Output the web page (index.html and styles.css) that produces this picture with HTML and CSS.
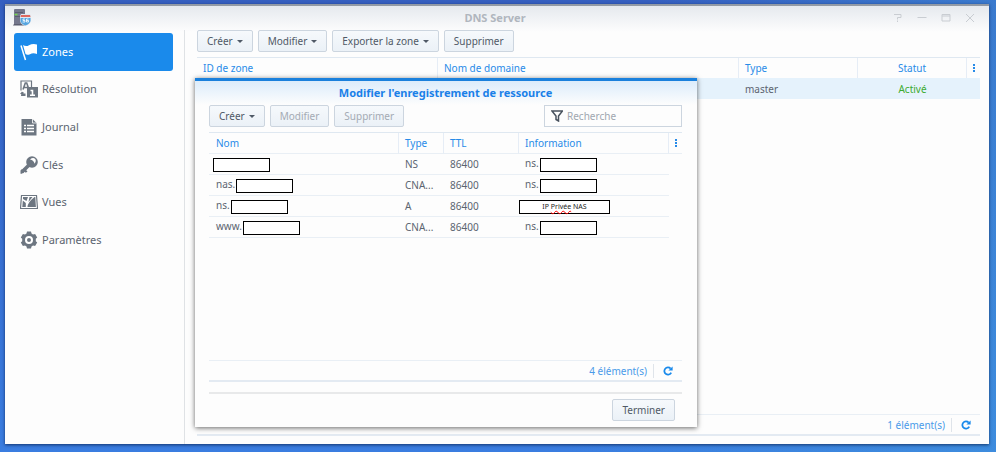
FILE: index.html
```html
<!DOCTYPE html>
<html lang="fr">
<head>
<meta charset="utf-8">
<title>DNS Server</title>
<link rel="stylesheet" href="styles.css">
</head>
<body>
<svg class="sprite" aria-hidden="true">
  <symbol id="refresh" viewBox="0 0 10 10"><path d="M8.2 6.6A3.6 3.6 0 1 1 7.6 2.6" fill="none" stroke="currentColor" stroke-width="1.8"/><path d="M9.6 0.6V4.6H5.4Z" fill="currentColor"/></symbol>
</svg>
<div class="window">
  <header class="titlebar">
    <svg class="app-icon" viewBox="0 0 18 18" aria-hidden="true">
      <rect x="1" y="0" width="11" height="16" rx="1" fill="#74778c"/><path d="M1 15h11v1.500H0z" fill="#5b5d70"/>
      <path d="M2 3.500h8M2 7.500h6" stroke="#5a5c70"/><path d="M1.500 5.500h3" stroke="#71d54d" stroke-width="1.500"/>
      <path d="M8 5h9l1 2v5q-1 4-5.500 5Q8 16 7 12V7z" fill="#dfe8f1"/><path d="M8 6h9l.5 2h-10z" fill="#df685e"/><path d="M7.500 9h10v3q-1 3-5 4.500Q8.500 15 7.500 12z" fill="#55a5e0"/>
      <path d="M12 10h-2v1.500h2V13H9.500M15.500 10h-2v3h2v-1.500h-2" fill="none" stroke="#fff" stroke-width=".8"/>
    </svg>
    <h1>DNS Server</h1>
    <div class="controls">
      <button type="button" aria-label="Aide"><svg viewBox="0 0 10 10"><path d="M1 1.500h7v3H4.500v2M4.500 7.500v1.500"/></svg></button>
      <button type="button" aria-label="Réduire"><svg viewBox="0 0 10 10"><path d="M0.500 4.500h9"/></svg></button>
      <button type="button" aria-label="Agrandir"><svg viewBox="0 0 10 10"><path d="M1 1.500h8v6.500H1zM1 3h8"/></svg></button>
      <button type="button" aria-label="Fermer"><svg viewBox="0 0 10 10"><path d="M1 1l8 8M9 1L1 9"/></svg></button>
    </div>
  </header>
  <div class="body">
    <nav class="sidebar">
      <div class="nav-list">
      <a class="active" href="#zones"><svg viewBox="0 0 18 18"><path d="M1 2.500L5.500 17" stroke="currentColor" stroke-width="1.500"/><path d="M3 2q3 2 6 .2Q13 0 17 1.500V11q-4-1.500-7 .2Q7 12.500 5.500 11z" fill="currentColor"/></svg>Zones</a>
      <a href="#resolution"><svg viewBox="0 0 18 18"><path d="M1 10.500V1h10.500v6" fill="none" stroke="currentColor" stroke-width="1.200"/><path d="M3 9.500L5.300 3h1.400L9 9.500M4 7.500h4" fill="none" stroke="currentColor" stroke-width="1.600"/><path d="M7 7h11v10.500H7z" fill="currentColor"/><path d="M10.500 10.500h2v5M10 15.200h5" fill="none" stroke="#fff" stroke-width="1.600"/><path d="M1 16h4.500v-2.500H3.500V12H1.500M2 11.500L0 14h4z" fill="currentColor"/></svg>Résolution</a>
      <a href="#journal"><svg viewBox="0 0 18 18"><path d="M1.500 1h11l4 4v12.500h-15z" fill="currentColor"/><path d="M12.500 1v4h4" fill="none" stroke="#fff" stroke-width=".8"/><path d="M4 7.500h2M4 10.500h2M4 13.500h2M7 7.500h7M7 10.500h7M7 13.500h7" stroke="#fff" stroke-width="1.500"/></svg>Journal</a>
      <a href="#cles"><svg viewBox="0 0 18 18"><path d="M9 9L2 16" stroke="currentColor" stroke-width="3.500"/><path d="M4 12l3.500 3.500-1.700 1.200-3-2.700zM0.500 14.500L2 13l2 3-2 1.800H.5z" fill="currentColor"/><circle cx="12" cy="6" r="5.800" fill="currentColor"/><path d="M10 3.500q3-2.500 5-.7 1.800 2-.5 5-.5-3.500-4.500-4.300z" fill="#fff"/></svg>Clés</a>
      <a href="#vues"><svg viewBox="0 0 18 18"><path d="M1.500 2.500h15l1 13H.5z" fill="#fff" stroke="currentColor" stroke-width="1.200"/><path d="M3 4h5L6.500 8 3 6zM2.800 7.500l3 2.500v4H2.300zM9.500 4h3L8.500 9zM14.500 4H15.300l.6 10H7.500Q7.500 9.500 14.500 4z" fill="currentColor"/></svg>Vues</a>
      <a href="#parametres"><svg viewBox="0 0 18 18"><path d="M6.500 2.500L7 0.500h4l.5 2 1.500 1 2.100-.5 2.100 3.400-1.400 1.400v2.400l1.400 1.400-2.100 3.400-2.100-.5-1.500 1-.5 2H7l-.5-2-1.500-1-2.100.5-2.100-3.400 1.400-1.400V7.800L.8 6.400 2.900 3l2.100.5z" fill="currentColor"/><circle cx="9" cy="9" r="3" fill="none" stroke="#fff" stroke-width="2"/></svg>Paramètres</a>
      </div>
    </nav>
    <main class="main">
      <div class="toolbar">
        <button type="button" class="btn menu">Créer</button>
        <button type="button" class="btn menu">Modifier</button>
        <button type="button" class="btn menu">Exporter la zone</button>
        <button type="button" class="btn">Supprimer</button>
      </div>
      <table class="grid zones">
        <colgroup><col class="z-id"><col><col class="z-type"><col class="z-status"><col class="c-menu"></colgroup>
        <thead><tr><th>ID de zone</th><th>Nom de domaine</th><th>Type</th><th class="center">Statut</th><th class="more"><i class="dots"></i></th></tr></thead>
        <tbody><tr class="selected"><td></td><td></td><td>master</td><td class="center ok">Activé</td><td></td></tr></tbody>
      </table>
      <div class="pager"><span>1 élément(s)</span><button type="button" aria-label="Actualiser"><svg><use href="#refresh"/></svg></button></div>
    </main>
  </div>
  <section class="dialog" role="dialog" aria-labelledby="dlg-title">
    <h2 id="dlg-title">Modifier l'enregistrement de ressource</h2>
    <div class="toolbar">
      <button type="button" class="btn menu">Créer</button>
      <button type="button" class="btn" disabled>Modifier</button>
      <button type="button" class="btn" disabled>Supprimer</button>
      <label class="search"><svg viewBox="0 0 12 12" aria-hidden="true"><path d="M1 1h10.500L7.500 6v5L5 9.500V6z" fill="none" stroke="#48525e" stroke-width="1.500"/></svg><input type="text" placeholder="Recherche" aria-label="Recherche"></label>
    </div>
    <table class="grid records">
      <colgroup><col><col class="r-type"><col class="r-ttl"><col class="r-info"><col class="c-menu"></colgroup>
      <thead><tr><th>Nom</th><th>Type</th><th>TTL</th><th>Information</th><th class="more"><i class="dots"></i></th></tr></thead>
      <tbody>
        <tr><td class="flush"><span class="mask"></span></td><td>NS</td><td>86400</td><td>ns.<span class="mask"></span></td></tr>
        <tr><td>nas.<span class="mask"></span></td><td>CNA...</td><td>86400</td><td>ns.<span class="mask"></span></td></tr>
        <tr><td>ns.<span class="mask"></span></td><td>A</td><td>86400</td><td class="note-cell"><span class="mask note">IP <span class="typo">Privée</span> NAS</span></td></tr>
        <tr><td>www.<span class="mask"></span></td><td>CNA...</td><td>86400</td><td>ns.<span class="mask"></span></td></tr>
      </tbody>
    </table>
    <div class="pager"><span>4 élément(s)</span><button type="button" aria-label="Actualiser"><svg><use href="#refresh"/></svg></button></div>
    <footer><button type="button" class="btn">Terminer</button></footer>
  </section>
</div>
</body>
</html>
```
FILE: styles.css
```css
* { box-sizing: border-box; }
body {
  margin: 0;
  height: 100vh;
  padding: 4px 7px 8px 5px;
  background: linear-gradient(100deg, rgba(64, 150, 220, 0) 60%, rgba(64, 150, 220, .6)), linear-gradient(#355fc0, #3a7de0);
  font: 10px/14px "Noto Sans", sans-serif;
  color: #5b6470;
}
.sprite { display: none; }
button, input { font: inherit; color: inherit; }
.window {
  position: relative;
  height: 100%;
  display: flex;
  flex-direction: column;
  border-top: 2px solid #929aa5;
  background: linear-gradient(#e5e9ee, #fdfdfd 26px);
  box-shadow: 0 1px 3px rgba(0, 20, 60, .7);
}
.titlebar {
  display: grid;
  grid-template-columns: 1fr auto 1fr;
  align-items: center;
  height: 24px;
  padding: 0 12px 0 8px;
}
.titlebar h1 { margin: 0; font-size: 11px; color: #b0b6be; }
.app-icon { width: 18px; height: 18px; }
.controls { display: flex; justify-content: flex-end; gap: 10px; }
.controls button { padding: 0; border: 0; background: none; width: 14px; height: 14px; display: grid; place-items: center; }
.controls svg { width: 10px; height: 10px; fill: none; stroke: #c9cdd2; stroke-width: 1; }
.body { flex: 1; display: flex; min-height: 0; }
.sidebar {
  width: 180px;
  flex: none;
  border-right: 1px solid #dfe2e5;
  padding: 3px 11px 0 9px;
}
.nav-list { display: grid; grid-auto-rows: 1fr; height: 226px; }
.sidebar a {
  display: flex;
  align-items: center;
  gap: 4px;
  padding: 0 6px;
  border-radius: 3px;
  font-size: 11px;
  color: #5b6470;
  text-decoration: none;
}
.sidebar svg { width: 18px; height: 18px; color: #6d7681; }
.sidebar .active { background: #1a8aeb; color: #fff; }
.sidebar .active svg { color: #fff; }
.main { flex: 1; display: flex; flex-direction: column; padding: 0 9px 8px 12px; }
.toolbar { display: flex; gap: 5px; }
.main .toolbar { margin-bottom: 5px; }
.btn {
  height: 22px;
  padding: 0 9px;
  border: 1px solid #ccd5df;
  border-radius: 2px;
  background: linear-gradient(#f6f9fc, #ebf1f7);
  color: #4f5966;
  white-space: nowrap;
}
.btn:disabled { color: #a4abb4; }
.menu::after {
  content: "";
  display: inline-block;
  margin-left: 4px;
  vertical-align: 2px;
  border: 3px solid transparent;
  border-top-color: currentColor;
  border-bottom: 0;
}
.grid { width: 100%; table-layout: fixed; border-collapse: separate; border-spacing: 0; border-top: 1px solid #dfe8f1; }
.grid th {
  height: 20px;
  padding: 0 6px;
  text-align: left;
  font-weight: normal;
  color: #288be8;
  border-right: 1px solid #e6edf6;
}
.grid th.more { border-right: 0; padding: 0; text-align: center; }
.grid td { height: 21px; padding: 0 6px; white-space: nowrap; }
.grid .center { text-align: center; }
.grid .ok { color: #3cab30; }
.dots { display: block; width: 2px; height: 8px; margin: 0 auto; background: repeating-linear-gradient(#288be8 0 2px, transparent 2px 3px); }
.z-id { width: 241px; }
.z-type { width: 119px; }
.z-status { width: 109px; }
.c-menu { width: 13px; }
.selected td { background: #e5f2fc; }
.pager {
  margin-top: auto;
  height: 22px;
  display: flex;
  align-items: center;
  justify-content: flex-end;
  border-top: 1px solid #e9eff5;
  border-bottom: 2px solid #e3eaf2;
  color: #4a9be9;
}
.pager span { padding-right: 6px; border-right: 1px solid #dfe4ea; }
.pager button { margin: 0; width: 28px; height: 16px; padding: 0; border: 0; background: none; color: #1a8aeb; display: grid; place-items: center; }
.pager svg { width: 10px; height: 10px; }
.dialog {
  position: absolute;
  top: 72px;
  left: 190px;
  width: 502px;
  height: 349px;
  display: flex;
  flex-direction: column;
  padding: 0 15px 0 14px;
  border-top: 3px solid #1a80dc;
  background: linear-gradient(#dcecfb, #fdfdfd 24px);
  box-shadow: 0 1px 5px rgba(0, 0, 0, .6);
}
.dialog h2 { margin: 0; height: 24px; font-size: 11px; line-height: 24px; text-align: center; color: #1a80e8; }
.dialog .toolbar { margin-bottom: 5px; }
.search {
  margin-left: auto;
  width: 138px;
  height: 22px;
  display: flex;
  align-items: center;
  gap: 4px;
  padding: 0 6px;
  border: 1px solid #ccd5df;
}
.search svg { width: 12px; height: 12px; flex: none; }
.search input { min-width: 0; flex: 1; padding: 0; border: 0; background: none; outline: 0; }
.search input::placeholder { color: #a0a7b0; opacity: 1; }
.r-type { width: 45px; }
.r-ttl { width: 75px; }
.r-info { width: 150px; }
.records th { border-bottom: 1px solid #e9eff5; height: 21px; }
.records td { border-bottom: 1px solid #e9eff5; }
.records th:first-child, .records td:first-child { padding-left: 7px; }
.records td.flush { padding-left: 3px; }
.records td.note-cell { padding-left: 0; }
.mask { display: inline-block; vertical-align: middle; width: 57px; height: 14px; margin-left: 1px; border: 1px solid #000; background: #fff; }
.note { width: 91px; margin-left: 0; font-size: 7px; line-height: 12px; text-align: center; color: #222; }
.typo { text-decoration: underline wavy red 1px; }
.dialog footer { margin-top: 10px; padding: 5px 7px 6px; border-top: 2px solid #e8e9ea; text-align: right; }
```
